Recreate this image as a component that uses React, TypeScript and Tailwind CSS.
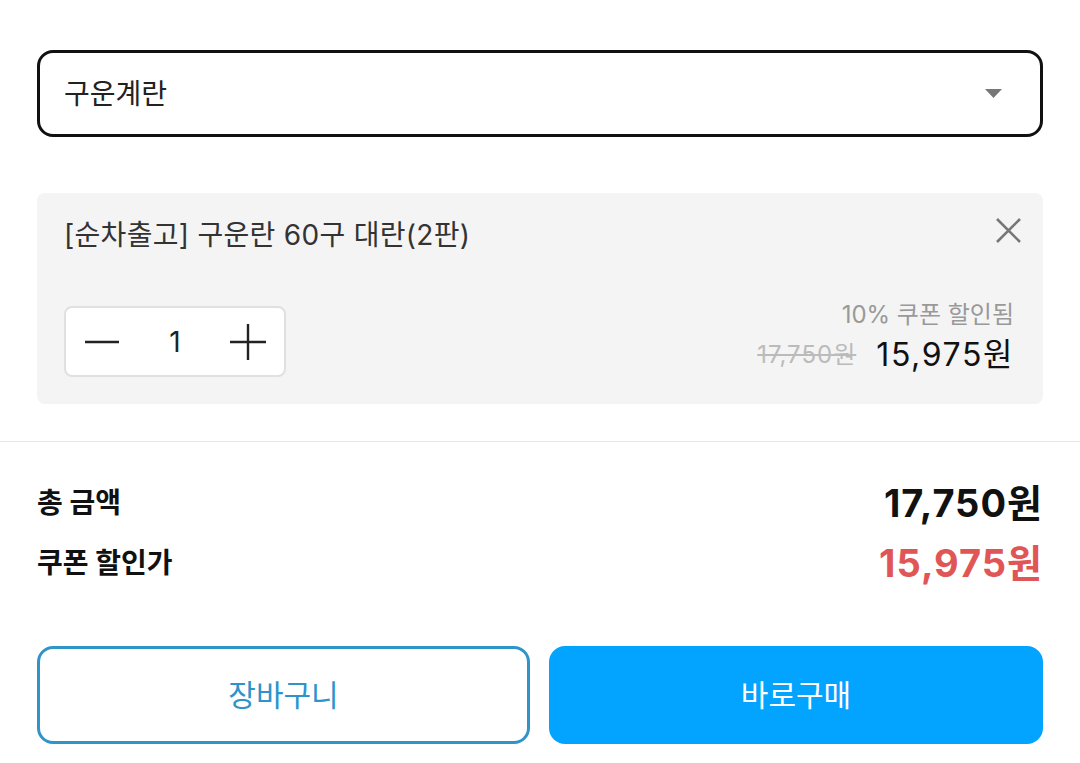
import React, { useState } from "react";

const font = {
  fontFamily: 'Inter, "Noto Sans CJK KR", "Noto Sans", sans-serif',
};

export default function App() {
  const [qty, setQty] = useState(1);

  return (
    <div className="w-[1080px] h-[763px] bg-white overflow-hidden" style={font}>
      <div className="px-[37px] pt-[50px]">
        {/* 옵션 선택 */}
        <div className="h-[87px] border-[3px] border-[#111] rounded-[16px] flex items-center justify-between pl-[24px] pr-[38px]">
          <span className="text-[28px] text-[#222] leading-none">구운계란</span>
          <svg width="17" height="9" viewBox="0 0 17 9">
            <path d="M0 0 H17 L8.5 9 Z" fill="#777" />
          </svg>
        </div>

        {/* 선택된 상품 */}
        <div className="relative mt-[56px] h-[211px] bg-[#f4f4f4] rounded-[8px] px-[27px] pt-[23px]">
          <button className="absolute right-[20px] top-[22px] w-[30px] h-[30px] flex items-center justify-center">
            <svg width="25" height="25" viewBox="0 0 25 25">
              <path d="M1 1 L24 24 M24 1 L1 24" stroke="#777" strokeWidth="2.6" />
            </svg>
          </button>
          <p className="text-[28px] leading-[38px] text-[#333] tracking-[0.3px]">
            [순차출고] 구운란 60구 대란(2판)
          </p>
          <div className="mt-[45px] flex items-end justify-between">
            <div className="w-[222px] h-[71px] bg-white border-2 border-[#e0e0e0] rounded-[8px] flex items-center justify-between px-[18px]">
              <button
                onClick={() => setQty(Math.max(1, qty - 1))}
                className="w-[36px] h-[36px] flex items-center justify-center"
              >
                <svg width="34" height="4" viewBox="0 0 34 4">
                  <path d="M0 2 H34" stroke="#222" strokeWidth="2.4" />
                </svg>
              </button>
              <span className="text-[28px] text-[#222]">{qty}</span>
              <button
                onClick={() => setQty(qty + 1)}
                className="w-[36px] h-[36px] flex items-center justify-center"
              >
                <svg width="36" height="36" viewBox="0 0 36 36">
                  <path d="M0 18 H36 M18 0 V36" stroke="#222" strokeWidth="2.4" />
                </svg>
              </button>
            </div>
            <div className="flex flex-col items-end pr-[2px] pb-[2px]">
              <span className="text-[24px] leading-[32px] text-[#999]">10% 쿠폰 할인됨</span>
              <div className="flex items-center gap-[20px] mt-[4px]">
                <span className="text-[24px] text-[#bbb] line-through tracking-[1px]">17,750원</span>
                <span className="text-[32px] leading-[40px] text-[#111] tracking-[1.6px]">15,975원</span>
              </div>
            </div>
          </div>
        </div>
      </div>

      <div className="mt-[37px] h-[1px] bg-[#e6e6e6]" />

      <div className="px-[37px]">
        {/* 합계 */}
        <div className="mt-[36px] flex flex-col gap-[10px]">
          <div className="h-[50px] flex items-center justify-between">
            <span className="text-[28px] font-bold text-[#111]">총 금액</span>
            <span className="text-[38px] font-bold text-[#111] tracking-[1px]">17,750원</span>
          </div>
          <div className="h-[50px] flex items-center justify-between">
            <span className="text-[28px] font-bold text-[#111]">쿠폰 할인가</span>
            <span className="text-[38px] font-bold text-[#e05656] tracking-[1px]">15,975원</span>
          </div>
        </div>

        {/* 버튼 */}
        <div className="mt-[58px] grid grid-cols-[493px_1fr] gap-[19px]">
          <button className="h-[98px] border-[3px] border-[#2f95c9] rounded-[16px] text-[30px] text-[#2c94cb] bg-white">
            장바구니
          </button>
          <button className="h-[98px] rounded-[16px] bg-[#03a4ff] text-[30px] text-white">
            바로구매
          </button>
        </div>
      </div>
    </div>
  );
}
